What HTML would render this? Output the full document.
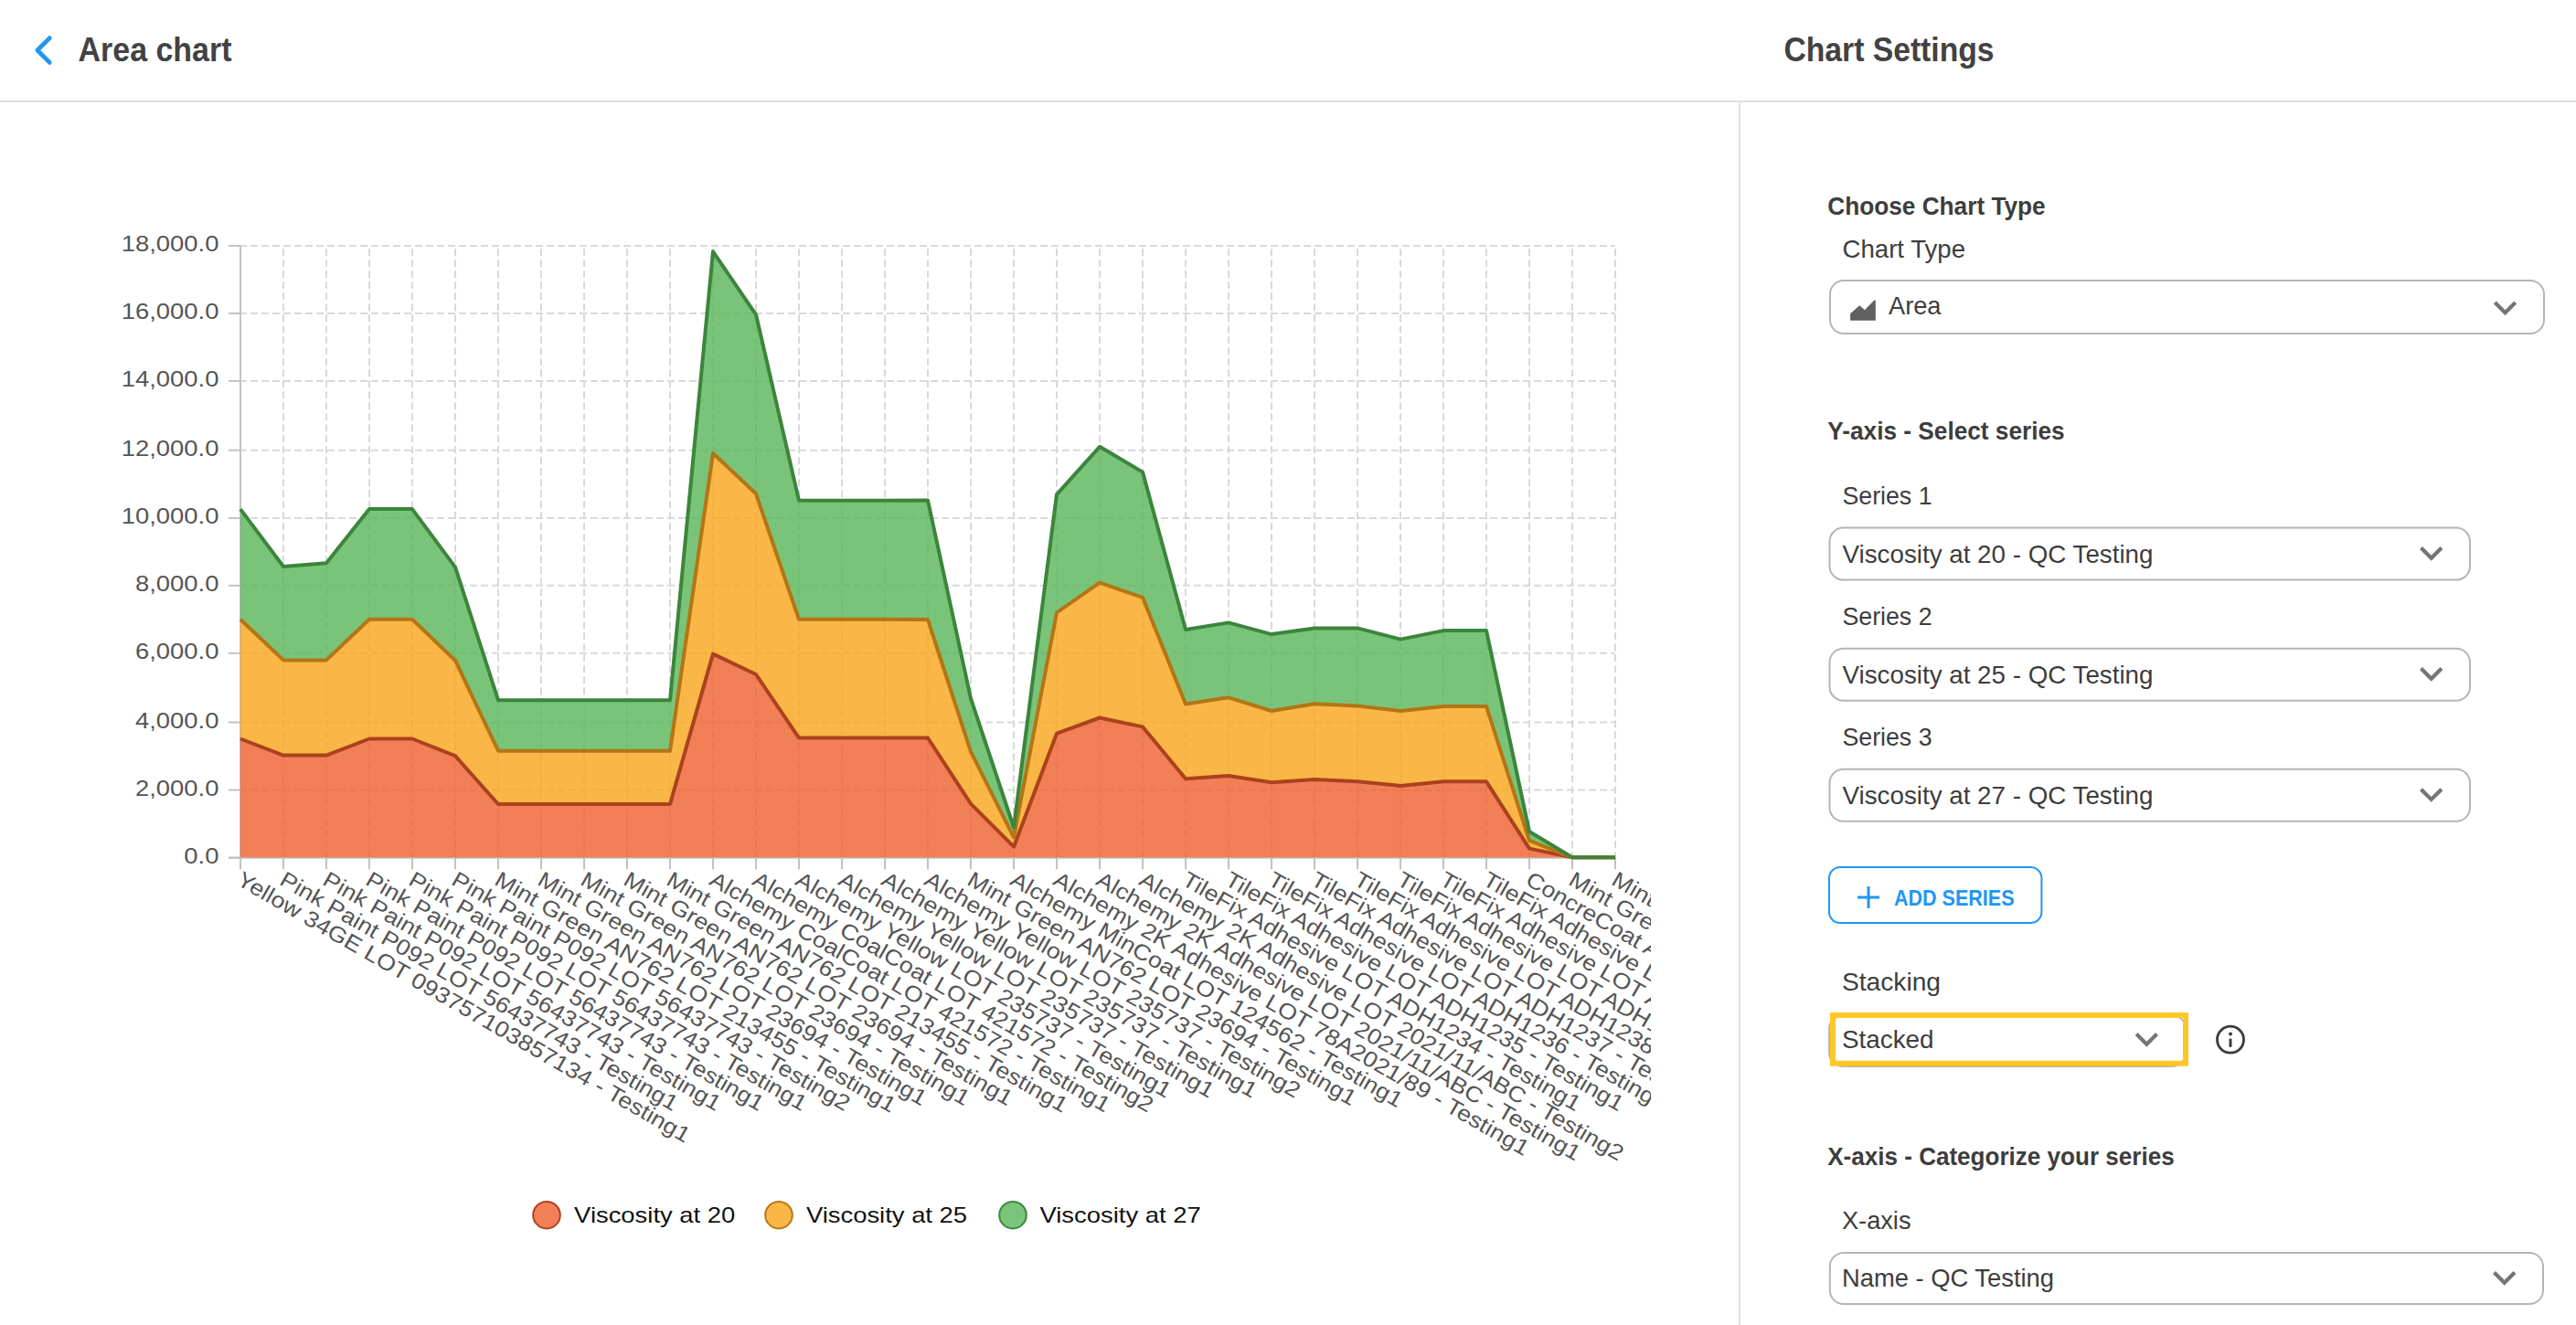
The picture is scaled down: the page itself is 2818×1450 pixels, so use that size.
<!DOCTYPE html>
<html><head><meta charset="utf-8"><style>
html,body{margin:0;padding:0;background:#fff;width:2818px;height:1450px;overflow:hidden}
svg{display:block}
text{font-family:"Liberation Sans",sans-serif}
</style></head><body>
<svg width="2818" height="1450" viewBox="0 0 2818 1450">

<path d="M54.3 41.6 L40.9 55 L54.3 68.4" fill="none" stroke="#2196F3" stroke-width="4.8" stroke-linecap="round" stroke-linejoin="round"/>
<text x="85.5" y="67.2" font-size="36" font-weight="bold" fill="#424242" text-anchor="start" textLength="168.0" lengthAdjust="spacingAndGlyphs">Area chart</text>
<rect x="0" y="110" width="2818" height="2" fill="#e0e0e0"/>
<rect x="1902" y="112" width="2" height="1338" fill="#e0e0e0"/>
<line x1="262" y1="269.0" x2="1767" y2="269.0" stroke="#d9d9d9" stroke-width="2" stroke-dasharray="8 4"/>
<line x1="262" y1="343.0" x2="1767" y2="343.0" stroke="#d9d9d9" stroke-width="2" stroke-dasharray="8 4"/>
<line x1="262" y1="417.0" x2="1767" y2="417.0" stroke="#d9d9d9" stroke-width="2" stroke-dasharray="8 4"/>
<line x1="262" y1="492.7" x2="1767" y2="492.7" stroke="#d9d9d9" stroke-width="2" stroke-dasharray="8 4"/>
<line x1="262" y1="567.0" x2="1767" y2="567.0" stroke="#d9d9d9" stroke-width="2" stroke-dasharray="8 4"/>
<line x1="262" y1="640.8" x2="1767" y2="640.8" stroke="#d9d9d9" stroke-width="2" stroke-dasharray="8 4"/>
<line x1="262" y1="714.8" x2="1767" y2="714.8" stroke="#d9d9d9" stroke-width="2" stroke-dasharray="8 4"/>
<line x1="262" y1="790.5" x2="1767" y2="790.5" stroke="#d9d9d9" stroke-width="2" stroke-dasharray="8 4"/>
<line x1="262" y1="864.5" x2="1767" y2="864.5" stroke="#d9d9d9" stroke-width="2" stroke-dasharray="8 4"/>
<line x1="310" y1="269" x2="310" y2="938" stroke="#d9d9d9" stroke-width="2" stroke-dasharray="8 4" stroke-dashoffset="8.8"/>
<line x1="357" y1="269" x2="357" y2="938" stroke="#d9d9d9" stroke-width="2" stroke-dasharray="8 4" stroke-dashoffset="8.8"/>
<line x1="404" y1="269" x2="404" y2="938" stroke="#d9d9d9" stroke-width="2" stroke-dasharray="8 4" stroke-dashoffset="8.8"/>
<line x1="451" y1="269" x2="451" y2="938" stroke="#d9d9d9" stroke-width="2" stroke-dasharray="8 4" stroke-dashoffset="8.8"/>
<line x1="498" y1="269" x2="498" y2="938" stroke="#d9d9d9" stroke-width="2" stroke-dasharray="8 4" stroke-dashoffset="8.8"/>
<line x1="545" y1="269" x2="545" y2="938" stroke="#d9d9d9" stroke-width="2" stroke-dasharray="8 4" stroke-dashoffset="8.8"/>
<line x1="592" y1="269" x2="592" y2="938" stroke="#d9d9d9" stroke-width="2" stroke-dasharray="8 4" stroke-dashoffset="8.8"/>
<line x1="639" y1="269" x2="639" y2="938" stroke="#d9d9d9" stroke-width="2" stroke-dasharray="8 4" stroke-dashoffset="8.8"/>
<line x1="686" y1="269" x2="686" y2="938" stroke="#d9d9d9" stroke-width="2" stroke-dasharray="8 4" stroke-dashoffset="8.8"/>
<line x1="733" y1="269" x2="733" y2="938" stroke="#d9d9d9" stroke-width="2" stroke-dasharray="8 4" stroke-dashoffset="8.8"/>
<line x1="780" y1="269" x2="780" y2="938" stroke="#d9d9d9" stroke-width="2" stroke-dasharray="8 4" stroke-dashoffset="8.8"/>
<line x1="827" y1="269" x2="827" y2="938" stroke="#d9d9d9" stroke-width="2" stroke-dasharray="8 4" stroke-dashoffset="8.8"/>
<line x1="874" y1="269" x2="874" y2="938" stroke="#d9d9d9" stroke-width="2" stroke-dasharray="8 4" stroke-dashoffset="8.8"/>
<line x1="921" y1="269" x2="921" y2="938" stroke="#d9d9d9" stroke-width="2" stroke-dasharray="8 4" stroke-dashoffset="8.8"/>
<line x1="968" y1="269" x2="968" y2="938" stroke="#d9d9d9" stroke-width="2" stroke-dasharray="8 4" stroke-dashoffset="8.8"/>
<line x1="1015" y1="269" x2="1015" y2="938" stroke="#d9d9d9" stroke-width="2" stroke-dasharray="8 4" stroke-dashoffset="8.8"/>
<line x1="1062" y1="269" x2="1062" y2="938" stroke="#d9d9d9" stroke-width="2" stroke-dasharray="8 4" stroke-dashoffset="8.8"/>
<line x1="1109" y1="269" x2="1109" y2="938" stroke="#d9d9d9" stroke-width="2" stroke-dasharray="8 4" stroke-dashoffset="8.8"/>
<line x1="1156" y1="269" x2="1156" y2="938" stroke="#d9d9d9" stroke-width="2" stroke-dasharray="8 4" stroke-dashoffset="8.8"/>
<line x1="1203" y1="269" x2="1203" y2="938" stroke="#d9d9d9" stroke-width="2" stroke-dasharray="8 4" stroke-dashoffset="8.8"/>
<line x1="1250" y1="269" x2="1250" y2="938" stroke="#d9d9d9" stroke-width="2" stroke-dasharray="8 4" stroke-dashoffset="8.8"/>
<line x1="1297" y1="269" x2="1297" y2="938" stroke="#d9d9d9" stroke-width="2" stroke-dasharray="8 4" stroke-dashoffset="8.8"/>
<line x1="1344" y1="269" x2="1344" y2="938" stroke="#d9d9d9" stroke-width="2" stroke-dasharray="8 4" stroke-dashoffset="8.8"/>
<line x1="1391" y1="269" x2="1391" y2="938" stroke="#d9d9d9" stroke-width="2" stroke-dasharray="8 4" stroke-dashoffset="8.8"/>
<line x1="1438" y1="269" x2="1438" y2="938" stroke="#d9d9d9" stroke-width="2" stroke-dasharray="8 4" stroke-dashoffset="8.8"/>
<line x1="1485" y1="269" x2="1485" y2="938" stroke="#d9d9d9" stroke-width="2" stroke-dasharray="8 4" stroke-dashoffset="8.8"/>
<line x1="1532" y1="269" x2="1532" y2="938" stroke="#d9d9d9" stroke-width="2" stroke-dasharray="8 4" stroke-dashoffset="8.8"/>
<line x1="1579" y1="269" x2="1579" y2="938" stroke="#d9d9d9" stroke-width="2" stroke-dasharray="8 4" stroke-dashoffset="8.8"/>
<line x1="1626" y1="269" x2="1626" y2="938" stroke="#d9d9d9" stroke-width="2" stroke-dasharray="8 4" stroke-dashoffset="8.8"/>
<line x1="1673" y1="269" x2="1673" y2="938" stroke="#d9d9d9" stroke-width="2" stroke-dasharray="8 4" stroke-dashoffset="8.8"/>
<line x1="1720" y1="269" x2="1720" y2="938" stroke="#d9d9d9" stroke-width="2" stroke-dasharray="8 4" stroke-dashoffset="8.8"/>
<line x1="1767" y1="269" x2="1767" y2="938" stroke="#d9d9d9" stroke-width="2" stroke-dasharray="8 4" stroke-dashoffset="8.8"/>
<rect x="262" y="269" width="2" height="670.3" fill="#c2c2c2"/>
<rect x="250" y="937.8" width="1518" height="2" fill="#c2c2c2"/>
<rect x="250" y="268.0" width="13" height="2" fill="#c2c2c2"/>
<rect x="250" y="342.0" width="13" height="2" fill="#c2c2c2"/>
<rect x="250" y="416.0" width="13" height="2" fill="#c2c2c2"/>
<rect x="250" y="491.7" width="13" height="2" fill="#c2c2c2"/>
<rect x="250" y="566.0" width="13" height="2" fill="#c2c2c2"/>
<rect x="250" y="639.8" width="13" height="2" fill="#c2c2c2"/>
<rect x="250" y="713.8" width="13" height="2" fill="#c2c2c2"/>
<rect x="250" y="789.5" width="13" height="2" fill="#c2c2c2"/>
<rect x="250" y="863.5" width="13" height="2" fill="#c2c2c2"/>
<rect x="250" y="937.5" width="13" height="2" fill="#c2c2c2"/>
<rect x="262" y="938.3" width="2" height="13" fill="#c2c2c2"/>
<rect x="309" y="938.3" width="2" height="13" fill="#c2c2c2"/>
<rect x="356" y="938.3" width="2" height="13" fill="#c2c2c2"/>
<rect x="403" y="938.3" width="2" height="13" fill="#c2c2c2"/>
<rect x="450" y="938.3" width="2" height="13" fill="#c2c2c2"/>
<rect x="497" y="938.3" width="2" height="13" fill="#c2c2c2"/>
<rect x="544" y="938.3" width="2" height="13" fill="#c2c2c2"/>
<rect x="591" y="938.3" width="2" height="13" fill="#c2c2c2"/>
<rect x="638" y="938.3" width="2" height="13" fill="#c2c2c2"/>
<rect x="685" y="938.3" width="2" height="13" fill="#c2c2c2"/>
<rect x="732" y="938.3" width="2" height="13" fill="#c2c2c2"/>
<rect x="779" y="938.3" width="2" height="13" fill="#c2c2c2"/>
<rect x="826" y="938.3" width="2" height="13" fill="#c2c2c2"/>
<rect x="873" y="938.3" width="2" height="13" fill="#c2c2c2"/>
<rect x="920" y="938.3" width="2" height="13" fill="#c2c2c2"/>
<rect x="967" y="938.3" width="2" height="13" fill="#c2c2c2"/>
<rect x="1014" y="938.3" width="2" height="13" fill="#c2c2c2"/>
<rect x="1061" y="938.3" width="2" height="13" fill="#c2c2c2"/>
<rect x="1108" y="938.3" width="2" height="13" fill="#c2c2c2"/>
<rect x="1155" y="938.3" width="2" height="13" fill="#c2c2c2"/>
<rect x="1202" y="938.3" width="2" height="13" fill="#c2c2c2"/>
<rect x="1249" y="938.3" width="2" height="13" fill="#c2c2c2"/>
<rect x="1296" y="938.3" width="2" height="13" fill="#c2c2c2"/>
<rect x="1343" y="938.3" width="2" height="13" fill="#c2c2c2"/>
<rect x="1390" y="938.3" width="2" height="13" fill="#c2c2c2"/>
<rect x="1437" y="938.3" width="2" height="13" fill="#c2c2c2"/>
<rect x="1484" y="938.3" width="2" height="13" fill="#c2c2c2"/>
<rect x="1531" y="938.3" width="2" height="13" fill="#c2c2c2"/>
<rect x="1578" y="938.3" width="2" height="13" fill="#c2c2c2"/>
<rect x="1625" y="938.3" width="2" height="13" fill="#c2c2c2"/>
<rect x="1672" y="938.3" width="2" height="13" fill="#c2c2c2"/>
<rect x="1719" y="938.3" width="2" height="13" fill="#c2c2c2"/>
<rect x="1766" y="938.3" width="2" height="13" fill="#c2c2c2"/>
<polygon points="263,808.5 310,826.6 357,826.6 404,808.5 451,808.5 498,827.2 545,880.0 592,880.0 639,880.0 686,880.0 733,880.0 780,715.6 827,738.0 874,807.6 921,807.6 968,807.6 1015,807.6 1062,879.6 1109,926.7 1156,802.7 1203,785.5 1250,795.4 1297,852.2 1344,849.0 1391,856.3 1438,853.0 1485,855.3 1532,859.9 1579,855.3 1626,855.3 1673,928.6 1720,938.3 1767,938.3 1767,938.3 263,938.3" fill="rgb(240,95,45)" fill-opacity="0.8"/>
<polygon points="263,677.8 310,722.4 357,722.4 404,677.8 451,677.8 498,722.7 545,821.7 592,821.7 639,821.7 686,821.7 733,821.7 780,496.0 827,540.3 874,677.8 921,677.8 968,677.8 1015,678.1 1062,822.6 1109,916.4 1156,670.3 1203,637.7 1250,653.8 1297,770.4 1344,763.3 1391,778.0 1438,770.2 1485,772.6 1532,778.0 1579,772.9 1626,772.9 1673,919.8 1720,938.3 1767,938.3 1767,938.3 1720,938.3 1673,928.6 1626,855.3 1579,855.3 1532,859.9 1485,855.3 1438,853.0 1391,856.3 1344,849.0 1297,852.2 1250,795.4 1203,785.5 1156,802.7 1109,926.7 1062,879.6 1015,807.6 968,807.6 921,807.6 874,807.6 827,738.0 780,715.6 733,880.0 686,880.0 639,880.0 592,880.0 545,880.0 498,827.2 451,808.5 404,808.5 357,826.6 310,826.6 263,808.5" fill="rgb(249,164,24)" fill-opacity="0.8"/>
<polygon points="263,557.1 310,620.0 357,616.3 404,557.1 451,557.1 498,620.6 545,766.3 592,766.3 639,766.3 686,766.3 733,766.3 780,275.3 827,344.3 874,547.8 921,547.8 968,547.8 1015,547.6 1062,764.3 1109,905.5 1156,541.1 1203,488.8 1250,516.6 1297,689.0 1344,681.4 1391,694.1 1438,687.4 1485,687.4 1532,699.6 1579,690.1 1626,690.1 1673,910.0 1720,938.3 1767,938.3 1767,938.3 1720,938.3 1673,919.8 1626,772.9 1579,772.9 1532,778.0 1485,772.6 1438,770.2 1391,778.0 1344,763.3 1297,770.4 1250,653.8 1203,637.7 1156,670.3 1109,916.4 1062,822.6 1015,678.1 968,677.8 921,677.8 874,677.8 827,540.3 780,496.0 733,821.7 686,821.7 639,821.7 592,821.7 545,821.7 498,722.7 451,677.8 404,677.8 357,722.4 310,722.4 263,677.8" fill="rgb(89,181,89)" fill-opacity="0.8"/>
<polyline points="263,808.5 310,826.6 357,826.6 404,808.5 451,808.5 498,827.2 545,880.0 592,880.0 639,880.0 686,880.0 733,880.0 780,715.6 827,738.0 874,807.6 921,807.6 968,807.6 1015,807.6 1062,879.6 1109,926.7 1156,802.7 1203,785.5 1250,795.4 1297,852.2 1344,849.0 1391,856.3 1438,853.0 1485,855.3 1532,859.9 1579,855.3 1626,855.3 1673,928.6 1720,938.3 1767,938.3" fill="none" stroke="rgb(170,66,30)" stroke-width="4" stroke-linejoin="round"/>
<polyline points="263,677.8 310,722.4 357,722.4 404,677.8 451,677.8 498,722.7 545,821.7 592,821.7 639,821.7 686,821.7 733,821.7 780,496.0 827,540.3 874,677.8 921,677.8 968,677.8 1015,678.1 1062,822.6 1109,916.4 1156,670.3 1203,637.7 1250,653.8 1297,770.4 1344,763.3 1391,778.0 1438,770.2 1485,772.6 1532,778.0 1579,772.9 1626,772.9 1673,919.8 1720,938.3 1767,938.3" fill="none" stroke="rgb(180,117,20)" stroke-width="4" stroke-linejoin="round"/>
<polyline points="263,557.1 310,620.0 357,616.3 404,557.1 451,557.1 498,620.6 545,766.3 592,766.3 639,766.3 686,766.3 733,766.3 780,275.3 827,344.3 874,547.8 921,547.8 968,547.8 1015,547.6 1062,764.3 1109,905.5 1156,541.1 1203,488.8 1250,516.6 1297,689.0 1344,681.4 1391,694.1 1438,687.4 1485,687.4 1532,699.6 1579,690.1 1626,690.1 1673,910.0 1720,938.3 1767,938.3" fill="none" stroke="rgb(60,133,60)" stroke-width="4" stroke-linejoin="round"/>
<text x="239.5" y="275" font-size="24" font-weight="normal" fill="#555" text-anchor="end" textLength="106.8" lengthAdjust="spacingAndGlyphs">18,000.0</text>
<text x="239.5" y="349" font-size="24" font-weight="normal" fill="#555" text-anchor="end" textLength="106.8" lengthAdjust="spacingAndGlyphs">16,000.0</text>
<text x="239.5" y="423" font-size="24" font-weight="normal" fill="#555" text-anchor="end" textLength="106.8" lengthAdjust="spacingAndGlyphs">14,000.0</text>
<text x="239.5" y="498.7" font-size="24" font-weight="normal" fill="#555" text-anchor="end" textLength="106.8" lengthAdjust="spacingAndGlyphs">12,000.0</text>
<text x="239.5" y="573" font-size="24" font-weight="normal" fill="#555" text-anchor="end" textLength="106.8" lengthAdjust="spacingAndGlyphs">10,000.0</text>
<text x="239.5" y="646.8" font-size="24" font-weight="normal" fill="#555" text-anchor="end" textLength="91.6" lengthAdjust="spacingAndGlyphs">8,000.0</text>
<text x="239.5" y="720.8" font-size="24" font-weight="normal" fill="#555" text-anchor="end" textLength="91.6" lengthAdjust="spacingAndGlyphs">6,000.0</text>
<text x="239.5" y="796.5" font-size="24" font-weight="normal" fill="#555" text-anchor="end" textLength="91.6" lengthAdjust="spacingAndGlyphs">4,000.0</text>
<text x="239.5" y="870.5" font-size="24" font-weight="normal" fill="#555" text-anchor="end" textLength="91.6" lengthAdjust="spacingAndGlyphs">2,000.0</text>
<text x="239.5" y="944.5" font-size="24" font-weight="normal" fill="#555" text-anchor="end" textLength="38.2" lengthAdjust="spacingAndGlyphs">0.0</text>
<defs><clipPath id="lc"><rect x="0" y="945" width="1806" height="400"/></clipPath></defs>
<g clip-path="url(#lc)">
<text x="257.5" y="967.3" font-size="24" fill="#555" textLength="567.8" lengthAdjust="spacingAndGlyphs" transform="rotate(30 257.5 967.3)">Yellow 34GE LOT 093757103857134 - Testing1</text>
<text x="304.5" y="967.3" font-size="24" fill="#555" textLength="498.2" lengthAdjust="spacingAndGlyphs" transform="rotate(30 304.5 967.3)">Pink Paint P092 LOT 56437743 - Testing1</text>
<text x="351.5" y="967.3" font-size="24" fill="#555" textLength="498.2" lengthAdjust="spacingAndGlyphs" transform="rotate(30 351.5 967.3)">Pink Paint P092 LOT 56437743 - Testing1</text>
<text x="398.5" y="967.3" font-size="24" fill="#555" textLength="498.2" lengthAdjust="spacingAndGlyphs" transform="rotate(30 398.5 967.3)">Pink Paint P092 LOT 56437743 - Testing1</text>
<text x="445.5" y="967.3" font-size="24" fill="#555" textLength="498.2" lengthAdjust="spacingAndGlyphs" transform="rotate(30 445.5 967.3)">Pink Paint P092 LOT 56437743 - Testing1</text>
<text x="492.5" y="967.3" font-size="24" fill="#555" textLength="498.2" lengthAdjust="spacingAndGlyphs" transform="rotate(30 492.5 967.3)">Pink Paint P092 LOT 56437743 - Testing2</text>
<text x="539.5" y="967.3" font-size="24" fill="#555" textLength="502.0" lengthAdjust="spacingAndGlyphs" transform="rotate(30 539.5 967.3)">Mint Green AN762 LOT 213455 - Testing1</text>
<text x="586.5" y="967.3" font-size="24" fill="#555" textLength="486.8" lengthAdjust="spacingAndGlyphs" transform="rotate(30 586.5 967.3)">Mint Green AN762 LOT 23694 - Testing1</text>
<text x="633.5" y="967.3" font-size="24" fill="#555" textLength="486.8" lengthAdjust="spacingAndGlyphs" transform="rotate(30 633.5 967.3)">Mint Green AN762 LOT 23694 - Testing1</text>
<text x="680.5" y="967.3" font-size="24" fill="#555" textLength="486.8" lengthAdjust="spacingAndGlyphs" transform="rotate(30 680.5 967.3)">Mint Green AN762 LOT 23694 - Testing1</text>
<text x="727.5" y="967.3" font-size="24" fill="#555" textLength="502.0" lengthAdjust="spacingAndGlyphs" transform="rotate(30 727.5 967.3)">Mint Green AN762 LOT 213455 - Testing1</text>
<text x="774.5" y="967.3" font-size="24" fill="#555" textLength="501.3" lengthAdjust="spacingAndGlyphs" transform="rotate(30 774.5 967.3)">Alchemy CoalCoat LOT 421572 - Testing1</text>
<text x="821.5" y="967.3" font-size="24" fill="#555" textLength="501.3" lengthAdjust="spacingAndGlyphs" transform="rotate(30 821.5 967.3)">Alchemy CoalCoat LOT 421572 - Testing2</text>
<text x="868.5" y="967.3" font-size="24" fill="#555" textLength="470.0" lengthAdjust="spacingAndGlyphs" transform="rotate(30 868.5 967.3)">Alchemy Yellow LOT 235737 - Testing1</text>
<text x="915.5" y="967.3" font-size="24" fill="#555" textLength="470.0" lengthAdjust="spacingAndGlyphs" transform="rotate(30 915.5 967.3)">Alchemy Yellow LOT 235737 - Testing1</text>
<text x="962.5" y="967.3" font-size="24" fill="#555" textLength="470.0" lengthAdjust="spacingAndGlyphs" transform="rotate(30 962.5 967.3)">Alchemy Yellow LOT 235737 - Testing1</text>
<text x="1009.5" y="967.3" font-size="24" fill="#555" textLength="470.0" lengthAdjust="spacingAndGlyphs" transform="rotate(30 1009.5 967.3)">Alchemy Yellow LOT 235737 - Testing2</text>
<text x="1056.5" y="967.3" font-size="24" fill="#555" textLength="486.8" lengthAdjust="spacingAndGlyphs" transform="rotate(30 1056.5 967.3)">Mint Green AN762 LOT 23694 - Testing1</text>
<text x="1103.5" y="967.3" font-size="24" fill="#555" textLength="491.0" lengthAdjust="spacingAndGlyphs" transform="rotate(30 1103.5 967.3)">Alchemy MinCoat LOT 124562 - Testing1</text>
<text x="1150.5" y="967.3" font-size="24" fill="#555" textLength="596.3" lengthAdjust="spacingAndGlyphs" transform="rotate(30 1150.5 967.3)">Alchemy 2K Adhesive LOT 78A2021/89 - Testing1</text>
<text x="1197.5" y="967.3" font-size="24" fill="#555" textLength="607.1" lengthAdjust="spacingAndGlyphs" transform="rotate(30 1197.5 967.3)">Alchemy 2K Adhesive LOT 2021/11/ABC - Testing1</text>
<text x="1244.5" y="967.3" font-size="24" fill="#555" textLength="607.1" lengthAdjust="spacingAndGlyphs" transform="rotate(30 1244.5 967.3)">Alchemy 2K Adhesive LOT 2021/11/ABC - Testing2</text>
<text x="1291.5" y="967.3" font-size="24" fill="#555" textLength="498.7" lengthAdjust="spacingAndGlyphs" transform="rotate(30 1291.5 967.3)">TileFix Adhesive LOT ADH1234 - Testing1</text>
<text x="1338.5" y="967.3" font-size="24" fill="#555" textLength="498.7" lengthAdjust="spacingAndGlyphs" transform="rotate(30 1338.5 967.3)">TileFix Adhesive LOT ADH1235 - Testing1</text>
<text x="1385.5" y="967.3" font-size="24" fill="#555" textLength="498.7" lengthAdjust="spacingAndGlyphs" transform="rotate(30 1385.5 967.3)">TileFix Adhesive LOT ADH1236 - Testing1</text>
<text x="1432.5" y="967.3" font-size="24" fill="#555" textLength="498.7" lengthAdjust="spacingAndGlyphs" transform="rotate(30 1432.5 967.3)">TileFix Adhesive LOT ADH1237 - Testing1</text>
<text x="1479.5" y="967.3" font-size="24" fill="#555" textLength="498.7" lengthAdjust="spacingAndGlyphs" transform="rotate(30 1479.5 967.3)">TileFix Adhesive LOT ADH1238 - Testing1</text>
<text x="1526.5" y="967.3" font-size="24" fill="#555" textLength="498.7" lengthAdjust="spacingAndGlyphs" transform="rotate(30 1526.5 967.3)">TileFix Adhesive LOT ADH1239 - Testing1</text>
<text x="1573.5" y="967.3" font-size="24" fill="#555" textLength="498.7" lengthAdjust="spacingAndGlyphs" transform="rotate(30 1573.5 967.3)">TileFix Adhesive LOT ADH1240 - Testing1</text>
<text x="1620.5" y="967.3" font-size="24" fill="#555" textLength="498.7" lengthAdjust="spacingAndGlyphs" transform="rotate(30 1620.5 967.3)">TileFix Adhesive LOT ADH1241 - Testing1</text>
<text x="1667.5" y="967.3" font-size="24" fill="#555" textLength="446.7" lengthAdjust="spacingAndGlyphs" transform="rotate(30 1667.5 967.3)">ConcreCoat AB LOT 55501 - Testing1</text>
<text x="1714.5" y="967.3" font-size="24" fill="#555" textLength="486.8" lengthAdjust="spacingAndGlyphs" transform="rotate(30 1714.5 967.3)">Mint Green AN762 LOT 23694 - Testing1</text>
<text x="1761.5" y="967.3" font-size="24" fill="#555" textLength="502.0" lengthAdjust="spacingAndGlyphs" transform="rotate(30 1761.5 967.3)">Mint Green AN762 LOT 213455 - Testing1</text>
</g>
<circle cx="598" cy="1329.7" r="14.8" fill="#F37F57" stroke="#AE4520" stroke-width="2"/>
<text x="628.1" y="1338.4" font-size="24" font-weight="normal" fill="#111" text-anchor="start" textLength="176.2" lengthAdjust="spacingAndGlyphs">Viscosity at 20</text>
<circle cx="852" cy="1329.7" r="14.8" fill="#FAB646" stroke="#B97A16" stroke-width="2"/>
<text x="881.9" y="1338.4" font-size="24" font-weight="normal" fill="#111" text-anchor="start" textLength="176.2" lengthAdjust="spacingAndGlyphs">Viscosity at 25</text>
<circle cx="1108" cy="1329.7" r="14.8" fill="#7AC57A" stroke="#3E873E" stroke-width="2"/>
<text x="1137.5" y="1338.4" font-size="24" font-weight="normal" fill="#111" text-anchor="start" textLength="176.2" lengthAdjust="spacingAndGlyphs">Viscosity at 27</text>
<text x="1951.5" y="67.4" font-size="36" font-weight="bold" fill="#424242" text-anchor="start" textLength="230.0" lengthAdjust="spacingAndGlyphs">Chart Settings</text>
<text x="1999.2" y="235" font-size="28" font-weight="bold" fill="#3d3d3d" text-anchor="start" textLength="238.5" lengthAdjust="spacingAndGlyphs">Choose Chart Type</text>
<text x="2015.5" y="282.2" font-size="28" font-weight="normal" fill="#3d3d3d" text-anchor="start" textLength="134.5" lengthAdjust="spacingAndGlyphs">Chart Type</text>
<rect x="2002" y="307" width="781" height="58" rx="15" ry="15" fill="#fff" stroke="#b5b5b5" stroke-width="2"/>
<polygon points="2024.1,343.3 2034.2,334.2 2039.8,339.3 2050.4,328.4 2051.8,328.7 2051.8,350.8 2024.1,350.8" fill="#606060"/>
<text x="2066" y="344" font-size="28" font-weight="normal" fill="#3d3d3d" text-anchor="start" textLength="57.5" lengthAdjust="spacingAndGlyphs">Area</text>
<path transform="translate(2715.1 311.4) scale(2.117)" d="M16.59 8.59L12 13.17 7.41 8.59 6 10l6 6 6-6z" fill="#757575"/>
<text x="1999.2" y="481.2" font-size="28" font-weight="bold" fill="#3d3d3d" text-anchor="start" textLength="259.5" lengthAdjust="spacingAndGlyphs">Y-axis - Select series</text>
<text x="2015.5" y="552.0" font-size="28" font-weight="normal" fill="#3d3d3d" text-anchor="start" textLength="98.0" lengthAdjust="spacingAndGlyphs">Series 1</text>
<rect x="2001.5" y="577.6" width="700.5" height="57" rx="15" ry="15" fill="#fff" stroke="#b5b5b5" stroke-width="2"/>
<text x="2015.5" y="615.9" font-size="28" font-weight="normal" fill="#3d3d3d" text-anchor="start" textLength="340.0" lengthAdjust="spacingAndGlyphs">Viscosity at 20 - QC Testing</text>
<path transform="translate(2634.3 579.8) scale(2.117)" d="M16.59 8.59L12 13.17 7.41 8.59 6 10l6 6 6-6z" fill="#757575"/>
<text x="2015.5" y="684.1" font-size="28" font-weight="normal" fill="#3d3d3d" text-anchor="start" textLength="98.0" lengthAdjust="spacingAndGlyphs">Series 2</text>
<rect x="2001.5" y="709.7" width="700.5" height="57" rx="15" ry="15" fill="#fff" stroke="#b5b5b5" stroke-width="2"/>
<text x="2015.5" y="748.0" font-size="28" font-weight="normal" fill="#3d3d3d" text-anchor="start" textLength="340.0" lengthAdjust="spacingAndGlyphs">Viscosity at 25 - QC Testing</text>
<path transform="translate(2634.3 711.9) scale(2.117)" d="M16.59 8.59L12 13.17 7.41 8.59 6 10l6 6 6-6z" fill="#757575"/>
<text x="2015.5" y="816.2" font-size="28" font-weight="normal" fill="#3d3d3d" text-anchor="start" textLength="98.0" lengthAdjust="spacingAndGlyphs">Series 3</text>
<rect x="2001.5" y="841.8" width="700.5" height="57" rx="15" ry="15" fill="#fff" stroke="#b5b5b5" stroke-width="2"/>
<text x="2015.5" y="880.1" font-size="28" font-weight="normal" fill="#3d3d3d" text-anchor="start" textLength="340.0" lengthAdjust="spacingAndGlyphs">Viscosity at 27 - QC Testing</text>
<path transform="translate(2634.3 844.0) scale(2.117)" d="M16.59 8.59L12 13.17 7.41 8.59 6 10l6 6 6-6z" fill="#757575"/>
<rect x="2001" y="949" width="232.4" height="61" rx="12" ry="12" fill="#fff" stroke="#2196F3" stroke-width="2"/>
<path d="M2044 970 V994 M2032 982 H2056" stroke="#2196F3" stroke-width="3"/>
<text x="2072" y="990.8" font-size="24.5" font-weight="bold" fill="#2196F3" text-anchor="start" textLength="131.5" lengthAdjust="spacingAndGlyphs">ADD SERIES</text>
<text x="2015" y="1084" font-size="28" font-weight="normal" fill="#3d3d3d" text-anchor="start" textLength="108.0" lengthAdjust="spacingAndGlyphs">Stacking</text>
<rect x="2001" y="1111" width="390" height="56" rx="15" ry="15" fill="#fff" stroke="#b5b5b5" stroke-width="2"/>
<rect x="2005" y="1111" width="386" height="52.7" fill="none" stroke="#FFC627" stroke-width="6"/>
<text x="2015" y="1147" font-size="28" font-weight="normal" fill="#3d3d3d" text-anchor="start" textLength="100.5" lengthAdjust="spacingAndGlyphs">Stacked</text>
<path transform="translate(2322.9 1111.8) scale(2.117)" d="M16.59 8.59L12 13.17 7.41 8.59 6 10l6 6 6-6z" fill="#757575"/>
<circle cx="2440" cy="1137.7" r="14.5" fill="none" stroke="#3c3c3c" stroke-width="2.8"/>
<circle cx="2440" cy="1131.4" r="2" fill="#3c3c3c"/>
<rect x="2438.5" y="1136.5" width="3" height="9.5" rx="1.2" fill="#3c3c3c"/>
<text x="1999.2" y="1274.8" font-size="28" font-weight="bold" fill="#3d3d3d" text-anchor="start" textLength="379.5" lengthAdjust="spacingAndGlyphs">X-axis - Categorize your series</text>
<text x="2015" y="1345" font-size="28" font-weight="normal" fill="#3d3d3d" text-anchor="start" textLength="75.5" lengthAdjust="spacingAndGlyphs">X-axis</text>
<rect x="2001.8" y="1371" width="780.2" height="56" rx="15" ry="15" fill="#fff" stroke="#b5b5b5" stroke-width="2"/>
<text x="2015" y="1408" font-size="28" font-weight="normal" fill="#3d3d3d" text-anchor="start" textLength="232.0" lengthAdjust="spacingAndGlyphs">Name - QC Testing</text>
<path transform="translate(2714.3 1372.8) scale(2.117)" d="M16.59 8.59L12 13.17 7.41 8.59 6 10l6 6 6-6z" fill="#757575"/>
</svg></body></html>
